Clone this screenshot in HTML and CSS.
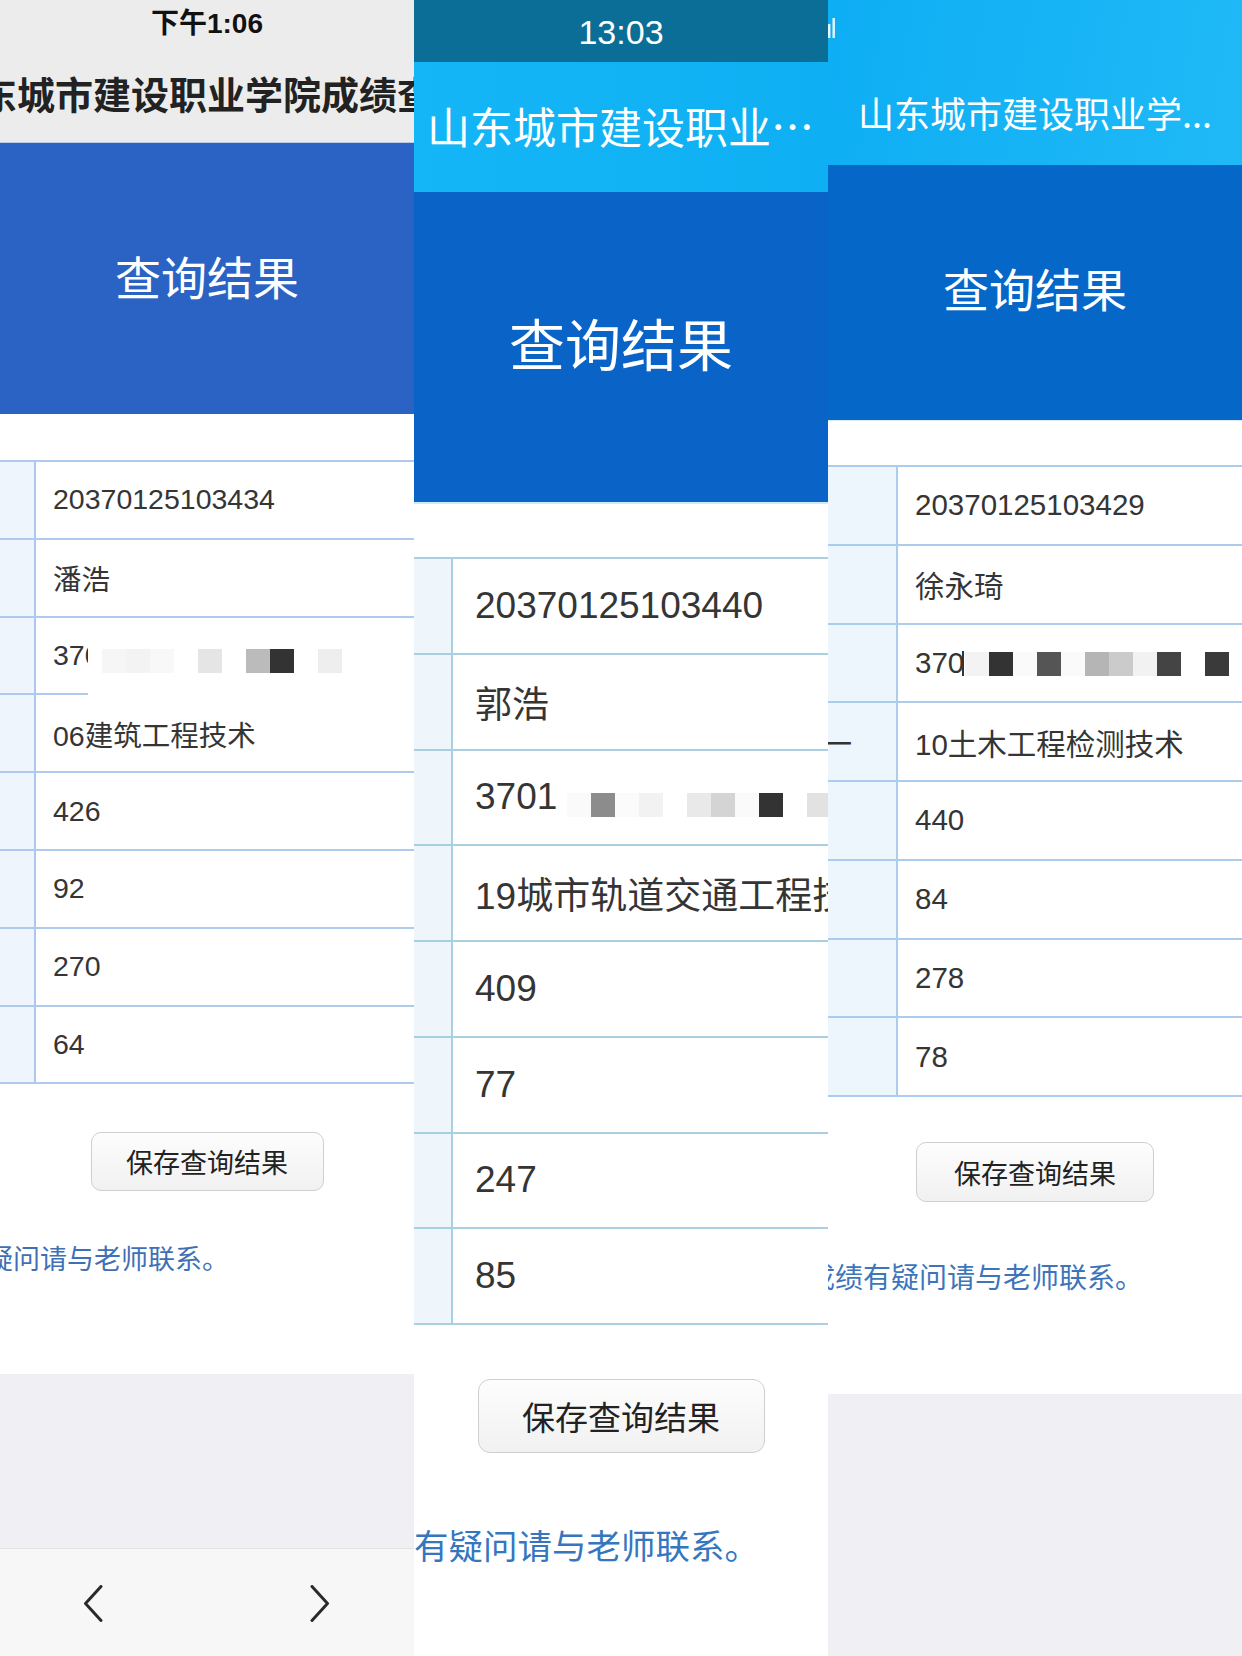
FILE: index.html
```html
<!DOCTYPE html>
<html lang="zh-CN">
<head>
<meta charset="utf-8">
<title>查询结果</title>
<link rel="stylesheet" href="styles.css">
</head>
<body>
<div class="collage">

  <!-- Panel 1 -->
  <section class="phone p1">
    <header class="top1">
      <div class="time1">下午1:06</div>
      <div class="title1">山东城市建设职业学院成绩查询</div>
    </header>
    <div class="hero hero1"><span>查询结果</span></div>
    <div class="content content1">
      <div class="tbl">
        <div class="row"><div class="lab"></div><div class="val">20370125103434</div></div>
        <div class="row"><div class="lab"></div><div class="val">潘浩</div></div>
        <div class="row"><div class="lab"></div><div class="val">370
          <div class="mask"><i class="s-f6"></i><i class="s-f3"></i><i class="s-f8"></i><i class="s-ff"></i><i class="s-e5"></i><i class="s-ff"></i><i class="s-bb"></i><i class="s-33"></i><i class="s-ff"></i><i class="s-ee"></i></div>
        </div></div>
        <div class="row"><div class="lab"></div><div class="val">06建筑工程技术</div></div>
        <div class="row"><div class="lab"></div><div class="val">426</div></div>
        <div class="row"><div class="lab"></div><div class="val">92</div></div>
        <div class="row"><div class="lab"></div><div class="val">270</div></div>
        <div class="row"><div class="lab"></div><div class="val">64</div></div>
      </div>
      <button class="btn" type="button">保存查询结果</button>
      <p class="note">如对成绩有疑问请与老师联系。</p>
    </div>
    <div class="gray gray1"></div>
    <nav class="toolbar1">
      <svg class="chev" width="20" height="37" viewBox="0 0 20 37"><path d="M18 1.5 L2.5 18.5 L18 35.5"/></svg>
      <svg class="chev" width="20" height="37" viewBox="0 0 20 37"><path d="M2 1.5 L17.5 18.5 L2 35.5"/></svg>
    </nav>
  </section>

  <!-- Panel 2 -->
  <section class="phone p2">
    <div class="status2">13:03</div>
    <header class="nav2">山东城市建设职业…</header>
    <div class="hero hero2"><span>查询结果</span></div>
    <div class="content content2">
      <div class="tbl">
        <div class="row"><div class="lab"></div><div class="val">20370125103440</div></div>
        <div class="row"><div class="lab"></div><div class="val">郭浩</div></div>
        <div class="row"><div class="lab"></div><div class="val">3701
          <div class="mask"><i class="s-fa"></i><i class="s-8c"></i><i class="s-fb"></i><i class="s-f2"></i><i class="s-ff"></i><i class="s-e9"></i><i class="s-d4"></i><i class="s-fa"></i><i class="s-33"></i><i class="s-ff"></i><i class="s-e2"></i></div>
        </div></div>
        <div class="row"><div class="lab"></div><div class="val">19城市轨道交通工程技术</div></div>
        <div class="row"><div class="lab"></div><div class="val">409</div></div>
        <div class="row"><div class="lab"></div><div class="val">77</div></div>
        <div class="row"><div class="lab"></div><div class="val">247</div></div>
        <div class="row"><div class="lab"></div><div class="val">85</div></div>
      </div>
      <button class="btn" type="button">保存查询结果</button>
      <p class="note">如对成绩有疑问请与老师联系。</p>
    </div>
  </section>

  <!-- Panel 3 -->
  <section class="phone p3">
    <header class="top3">
      <svg class="signal" width="8" height="20" viewBox="0 0 8 20"><rect x="0" y="6" width="2.4" height="14"/><rect x="4.5" y="0" width="2.4" height="20"/></svg>
      <div class="title3">山东城市建设职业学...</div>
    </header>
    <div class="hero hero3"><span>查询结果</span></div>
    <div class="content content3">
      <div class="tbl">
        <div class="row"><div class="lab"></div><div class="val">20370125103429</div></div>
        <div class="row"><div class="lab"></div><div class="val">徐永琦</div></div>
        <div class="row"><div class="lab"></div><div class="val">370
          <div class="mask"><i class="s-f3"></i><i class="s-33"></i><i class="s-fa"></i><i class="s-55"></i><i class="s-fa"></i><i class="s-b5"></i><i class="s-cb"></i><i class="s-f2"></i><i class="s-44"></i><i class="s-ff"></i><i class="s-3a"></i></div>
        </div></div>
        <div class="row"><div class="lab"><span class="labtail">一</span></div><div class="val">10土木工程检测技术</div></div>
        <div class="row"><div class="lab"></div><div class="val">440</div></div>
        <div class="row"><div class="lab"></div><div class="val">84</div></div>
        <div class="row"><div class="lab"></div><div class="val">278</div></div>
        <div class="row"><div class="lab"></div><div class="val">78</div></div>
      </div>
      <button class="btn" type="button">保存查询结果</button>
      <p class="note">如对成绩有疑问请与老师联系。</p>
    </div>
    <div class="gray gray3"></div>
  </section>

</div>
</body>
</html>
```

FILE: styles.css
```css
* { box-sizing: border-box; }

html, body {
  margin: 0;
  padding: 0;
  background: #fff;
}

body {
  font-family: "Liberation Sans", "Noto Sans CJK SC", sans-serif;
  color: #333;
}

.collage {
  display: flex;
  width: 1242px;
  height: 1656px;
}

.phone {
  width: 414px;
  height: 1656px;
  flex-shrink: 0;
  overflow: hidden;
  display: flex;
  flex-direction: column;
  background: #fff;
}

/* ---------- shared ---------- */
.hero {
  display: flex;
  align-items: center;
  justify-content: center;
  color: #fff;
  flex-shrink: 0;
}
.hero span { font-family: "Noto Sans CJK SC", sans-serif; font-weight: 400; }

.content {
  display: flex;
  flex-direction: column;
  align-items: center;
  flex-shrink: 0;
  background: #fff;
}

.tbl {
  width: 100%;
  border-top: 2px solid #aecbef;
}

.row {
  display: flex;
  border-bottom: 2px solid #aecbef;
}

.lab {
  flex-shrink: 0;
  background: #eef5fd;
  border-right: 2px solid #abc9ee;
  display: flex;
  align-items: center;
  overflow: hidden;
}

.val {
  flex: 1;
  display: flex;
  align-items: center;
  white-space: nowrap;
  position: relative;
  color: #353535;
}

.mask {
  position: absolute;
  right: 0;
  display: flex;
  align-items: flex-start;
  background: #fff;
}
.mask i { display: block; width: 24px; height: 24px; flex-shrink: 0; }

.s-ff { background: #ffffff; }
.s-fb { background: #fbfbfb; }
.s-fa { background: #fafafa; }
.s-f8 { background: #f8f8f8; }
.s-f6 { background: #f6f6f6; }
.s-f3 { background: #f3f3f3; }
.s-f2 { background: #f2f2f2; }
.s-ee { background: #eeeeee; }
.s-e9 { background: #e9e9e9; }
.s-e5 { background: #e5e5e5; }
.s-e2 { background: #e2e2e2; }
.s-d4 { background: #d4d4d4; }
.s-cb { background: #cbcbcb; }
.s-bb { background: #bbbbbb; }
.s-b5 { background: #b5b5b5; }
.s-8c { background: #8c8c8c; }
.s-55 { background: #555555; }
.s-44 { background: #444444; }
.s-3a { background: #3a3a3a; }
.s-33 { background: #333333; }

.btn {
  display: flex;
  align-items: center;
  justify-content: center;
  padding: 0;
  font-family: "Noto Sans CJK SC", sans-serif;
  color: #222;
  background: linear-gradient(#fdfdfd, #f1f1f1);
  border: 1px solid #cfcfcf;
}

.note {
  align-self: flex-start;
  margin-bottom: 0;
  white-space: nowrap;
  font-family: "Noto Sans CJK SC", sans-serif;
}

.gray { background: #efeff4; }

/* ---------- panel 1 ---------- */
.top1 {
  height: 143px;
  flex-shrink: 0;
  background: #ececec;
  border-bottom: 1px solid #b8cbe8;
  display: flex;
  flex-direction: column;
  align-items: center;
}
.time1 {
  font-size: 28px;
  font-weight: bold;
  line-height: 48px;
  color: #111;
  white-space: nowrap;
}
.title1 {
  font-family: "Noto Sans CJK SC", sans-serif;
  font-size: 38px;
  font-weight: bold;
  line-height: 38px;
  margin-top: 26px;
  white-space: nowrap;
  color: #222;
}
.hero1 { height: 271px; background: #2b63c5; padding-bottom: 8px; }
.hero1 span { font-size: 46px; }

.content1 { height: 960px; padding-top: 46px; }
.p1 .row { height: 77.8px; }
.p1 .lab { width: 36px; }
.p1 .val { padding-left: 17px; font-size: 28.5px; }
.p1 .mask { left: 52px; top: 27px; height: 55px; padding: 4px 0 0 14px; }
.p1 .btn { width: 233px; height: 59px; margin-top: 48px; border-radius: 10px; font-size: 27px; }
.p1 .note { margin-top: 50px; margin-left: -149px; font-size: 27px; line-height: 34px; color: #3f70b6; }

.gray1 { height: 174px; flex-shrink: 0; }
.toolbar1 {
  flex: 1;
  background: #f7f7f7;
  border-top: 1px solid #e3e3e3;
  display: flex;
  justify-content: space-between;
  align-items: flex-start;
  padding: 36px 84px 0 83px;
}
.chev path { fill: none; stroke: #2a2a2a; stroke-width: 3; stroke-linecap: round; stroke-linejoin: round; }

/* ---------- panel 2 ---------- */
.status2 {
  height: 62px;
  flex-shrink: 0;
  background: #0a6e96;
  color: #fff;
  font-size: 34px;
  line-height: 64px;
  text-align: center;
}
.nav2 {
  height: 130px;
  flex-shrink: 0;
  background: linear-gradient(90deg, #14b6f7, #0eb0f3);
  color: #fff;
  font-family: "Noto Sans CJK SC", sans-serif;
  font-size: 43px;
  line-height: 126px;
  padding-left: 13px;
  white-space: nowrap;
}
.hero2 { height: 312px; background: #0a64c8; border-bottom: 2px solid #cdeaf7; padding-bottom: 12px; }
.hero2 span { font-size: 56px; }

.content2 { padding-top: 53px; }
.p2 .tbl { border-top-color: #a9cfe3; }
.p2 .row { height: 95.75px; border-bottom-color: #a9cfe3; }
.p2 .lab { width: 39px; background: #eef6fb; border-right-color: #a9cfe3; }
.p2 .val { padding-left: 22px; font-size: 37px; }
.p2 .mask { left: 104px; top: 37px; height: 29px; padding: 5px 0 0 10px; }
.p2 .btn { width: 287px; height: 74px; margin-top: 54px; border-radius: 12px; font-size: 33px; }
.p2 .note { margin-top: 69px; margin-left: -138px; font-size: 34.5px; line-height: 44px; color: #3676bf; }

/* ---------- panel 3 ---------- */
.top3 {
  height: 165px;
  flex-shrink: 0;
  position: relative;
  background: linear-gradient(100deg, #0eaef4, #1fb9f6);
  display: flex;
  flex-direction: column;
  align-items: center;
  padding-top: 94px;
}
.signal { position: absolute; left: 0; top: 18px; }
.signal rect { fill: #e8f8ff; }
.title3 {
  color: #fff;
  font-family: "Noto Sans CJK SC", sans-serif;
  font-size: 36px;
  line-height: 36px;
  white-space: nowrap;
}
.hero3 { height: 256px; background: #0567c8; border-bottom: 1px solid #d6ecfa; padding-bottom: 12px; }
.hero3 span { font-size: 46px; }

.content3 { height: 973px; padding-top: 44px; }
.p3 .tbl { border-top-color: #aacdee; }
.p3 .row { height: 78.75px; border-bottom-color: #aacdee; }
.p3 .lab { width: 70px; background: #edf5fd; border-right-color: #aacdee; }
.p3 .val { padding-left: 17px; font-size: 29.5px; }
.p3 .mask { left: 64px; top: 26px; height: 25px; padding: 1px 0 0 1px; border-left: 2px solid #333; }
.p3 .btn { width: 238px; height: 60px; margin-top: 45px; border-radius: 10px; font-size: 27px; }
.p3 .note { margin-top: 56px; margin-left: -77px; font-size: 28px; line-height: 36px; color: #3d74ba; }
.labtail {
  font-family: "Noto Sans CJK SC", sans-serif;
  font-size: 29px;
  margin-left: -5px;
  color: #333;
}

.gray3 { flex: 1; }
```
